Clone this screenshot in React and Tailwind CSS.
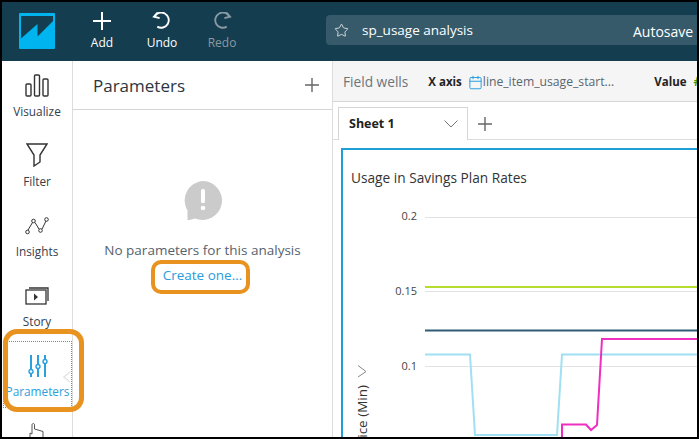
import { Star, Calendar } from "lucide-react";

const font = { fontFamily: '"Open Sans", sans-serif' };

const Logo = () => (
  <svg width="36" height="36" viewBox="0 0 36 36">
    <rect width="36" height="36" rx="1" fill="#00b4f0" />
    <path d="M2 3H34V8L18.500 23.500V11L2 25.500Z" fill="#143d4f" />
  </svg>
);

const PlusIcon = ({ size, color, width }) => (
  <svg width={size} height={size} viewBox="0 0 18 18" fill="none" stroke={color} strokeWidth={width}>
    <path d="M9 0V18M0 9H18" />
  </svg>
);

const UndoIcon = () => (
  <svg width="20" height="17" viewBox="0 0 20 18" fill="none" stroke="currentColor" strokeWidth="2">
    <path d="M2 5A8 8 0 1 1 5 15.500" />
    <path d="M5.500 0.500L1.500 5L7.500 6.500" />
  </svg>
);

const BarsIcon = () => (
  <svg width="24" height="23" viewBox="0 0 24 23" fill="none" stroke="#333" strokeWidth="1.4">
    <rect x="1" y="10" width="5" height="12" rx="1" />
    <rect x="9.500" y="1" width="5" height="21" rx="1" />
    <rect x="18" y="5" width="5" height="17" rx="1" />
  </svg>
);

const FilterIcon = () => (
  <svg width="22" height="24" viewBox="0 0 22 24" fill="none" stroke="#333" strokeWidth="1.4">
    <path d="M1 1H21L14 12V19L8 23V12Z" />
  </svg>
);

const InsightsIcon = () => (
  <svg width="24" height="18" viewBox="0 0 24 18" fill="none" stroke="#333" strokeWidth="1">
    <path d="M3 13L7.500 5.500M10 5.500L14 12M17 12L21 4" />
    <circle cx="2.500" cy="15" r="1.800" />
    <circle cx="8.500" cy="4" r="1.800" />
    <circle cx="15.500" cy="13.500" r="1.800" />
    <circle cx="21.500" cy="2.500" r="1.800" />
  </svg>
);

const StoryIcon = () => (
  <svg width="24" height="18" viewBox="0 0 24 18" fill="none" stroke="#333" strokeWidth="1.300">
    <rect x="1" y="3" width="20" height="14" />
    <path d="M4 1H23V14" />
    <path d="M9 6.500L13 10L9 13.500Z" fill="#333" stroke="none" />
  </svg>
);

const SlidersIcon = () => (
  <svg width="22" height="22" viewBox="0 0 22 22" fill="none" stroke="#2aa0dc" strokeWidth="2">
    <path d="M4 0V14M4 19V22M11 0V9M11 14V22M18 0V4M18 9V22" />
    <circle cx="4" cy="16.500" r="2" strokeWidth="1.400" fill="#fff" />
    <circle cx="11" cy="11.500" r="2" strokeWidth="1.400" fill="#fff" />
    <circle cx="18" cy="6.500" r="2" strokeWidth="1.400" fill="#fff" />
  </svg>
);

const SideItem = ({ icon, label, className }) => (
  <div className={`flex flex-col items-center justify-end ${className}`}>
    {icon}
    <span className="text-[11.8px] leading-4 text-[#33404c]">{label}</span>
  </div>
);

const HeaderBtn = ({ icon, label, muted }) => (
  <div className={`flex flex-col items-center w-[60px] ${muted ? "text-[#8a9aa3]" : "text-white"}`}>
    <div className="h-[17px] flex items-center">{icon}</div>
    <span className="text-[12px] leading-4 mt-[6px] font-medium">{label}</span>
  </div>
);

const Chart = () => (
  <svg width="356" height="290" viewBox="341 148 356 290" className="block">
    <path d="M425 217.500H697M425 291.500H697M425 366.500H697" stroke="#e2e2e2" strokeWidth="1" />
    <g fontSize="11" fill="#444" textAnchor="end" style={font}>
      <text x="417" y="220">0.2</text>
      <text x="417" y="295">0.15</text>
      <text x="417" y="370">0.1</text>
    </g>
    <path d="M425 287H697" stroke="#b5dd30" strokeWidth="2" fill="none" />
    <path d="M425 330.500H697" stroke="#2f5d75" strokeWidth="2" fill="none" />
    <path d="M425 354.500H470L475 435H557L562 354.500H697" stroke="#a0e0f2" strokeWidth="2" fill="none" />
    <path d="M562 438V424.500H586L591 430L597 425L602 339H697" stroke="#ee2fc0" strokeWidth="2" fill="none" />
    <path d="M358 365.500L366 371.500L358 377" stroke="#888" strokeWidth="1" fill="none" />
    <text transform="translate(367 385) rotate(-90)" fontSize="13.5" fill="#333" textAnchor="end" style={font}>ice (Min)</text>
  </svg>
);

export default function App() {
  return (
    <div className="relative w-[699px] h-[439px] border-2 border-black bg-white overflow-hidden flex flex-col" style={font}>
      <header className="h-[59px] shrink-0 bg-[#143d4f] flex items-center">
        <div className="ml-[17px] mr-[17px] mb-[1px]"><Logo /></div>
        <HeaderBtn icon={<PlusIcon size={18} color="#fff" width={2} />} label="Add" />
        <HeaderBtn icon={<UndoIcon />} label="Undo" />
        <HeaderBtn muted icon={<span className="block scale-x-[-1]"><UndoIcon /></span>} label="Redo" />
        <div className="ml-[74px] mb-[3px] flex-1 h-[30px] mr-[-20px] rounded-l-sm bg-[#365a6a] flex items-center text-white">
          <Star size={15} strokeWidth={1.2} className="ml-2" />
          <span className="ml-[13px] text-[13.500px]">sp_usage analysis</span>
          <span className="ml-auto mr-[-1px] mt-[2px] w-[85px] shrink-0 text-[14px] whitespace-nowrap">Autosave</span>
        </div>
      </header>

      <div className="flex-1 flex min-h-0">
        <aside className="w-[71px] shrink-0 border-r border-[#dcdcdc] flex flex-col">
          <SideItem icon={<div className="mb-[6px]"><BarsIcon /></div>} label="Visualize" className="h-[58px]" />
          <SideItem icon={<div className="mb-[6px]"><FilterIcon /></div>} label="Filter" className="h-[70px]" />
          <SideItem icon={<div className="mb-[8px]"><InsightsIcon /></div>} label="Insights" className="h-[70px]" />
          <SideItem icon={<div className="mb-[8px]"><StoryIcon /></div>} label="Story" className="h-[70px]" />
          <div className="relative mt-[12px] ml-[1px] h-[67px] w-[69px] border border-dotted border-[#2aa0dc] flex flex-col items-center pt-[13px]">
            <SlidersIcon />
            <span className="text-[11.800px] leading-4 mt-[6px] text-[#2aa0dc] whitespace-nowrap">Parameters</span>
            <svg className="absolute right-0 top-[29px]" width="8" height="12" viewBox="0 0 8 12" fill="none" stroke="#e5e5e5" strokeWidth="1.500">
              <path d="M7 1L1 6L7 11" />
            </svg>
          </div>
        </aside>

        <section className="w-[260px] shrink-0 border-r border-[#dcdcdc] flex flex-col">
          <div className="h-[49px] border-b border-[#d5d5d5] flex items-center justify-between pl-[20px] pr-[13px]">
            <span className="text-[17px] text-[#2b3640] mt-[1px]">Parameters</span>
            <PlusIcon size={14} color="#666" width={1.800} />
          </div>
          <div className="flex flex-col items-center pt-[70px]">
            <svg width="40" height="40" viewBox="0 0 40 40">
              <path d="M20 1A19.500 19.500 0 1 1 12 38.500L4.500 40.500V30.500A19.500 19.500 0 0 1 20 1Z" fill="#cbcbcb" />
              <rect x="18" y="9" width="4" height="14" rx="1.500" fill="#fff" />
              <circle cx="20" cy="28" r="2.300" fill="#fff" />
            </svg>
            <span className="mt-[20px] text-[13.500px] leading-5 text-[#56626c]">No parameters for this analysis</span>
            <span className="mt-[5px] text-[13.500px] leading-5 text-[#2a9cdc]">Create one...</span>
          </div>
        </section>

        <main className="flex-1 min-w-0 flex flex-col">
          <div className="h-[41px] shrink-0 bg-[#f5f5f5] border-b border-[#d5d5d5] flex items-center pl-[10px] pt-[2px] whitespace-nowrap">
            <span className="text-[13.700px] text-[#6b747c]">Field wells</span>
            <span className="ml-[20px] text-[11.500px] font-bold text-[#222]">X axis</span>
            <Calendar size={15} strokeWidth={1.600} className="ml-[6px] shrink-0 text-[#2aa0dc]" />
            <span className="text-[12.200px] text-[#5a6670]">line_item_usage_start...</span>
            <span className="ml-[40px] text-[11.500px] font-bold text-[#222]">Value</span>
            <span className="ml-[7px] text-[13px] font-bold text-[#3d9a00]">#</span>
          </div>
          <div className="h-[38px] shrink-0 flex items-end pl-[5px] border-b border-[#dcdcdc]">
            <div className="w-[130px] h-[33px] border border-b-0 border-[#d5d5d5] flex items-center justify-between pl-[10px] pr-[9px] mb-[-1px] bg-white">
              <span className="text-[12.500px] font-bold text-[#222]">Sheet 1</span>
              <svg width="14" height="8" viewBox="0 0 14 8" fill="none" stroke="#777" strokeWidth="1">
                <path d="M0.500 0.500L7 7L13.500 0.500" />
              </svg>
            </div>
            <div className="ml-[10px] mb-[8px]"><PlusIcon size={14} color="#666" width={1.800} /></div>
          </div>
          <div className="flex-1 mt-[8px] ml-[8px] border-2 border-r-0 border-b-0 border-[#1f9fd8] relative min-h-0">
            <div className="pl-[8px] pt-[18px] text-[13.700px] leading-5 text-[#333]">Usage in Savings Plan Rates</div>
            <div className="absolute left-[-2px] top-[-2px]"><Chart /></div>
          </div>
        </main>
      </div>

      <div className="absolute left-[1px] top-[327px] w-[81px] h-[83px] rounded-[14px] border-[5px] border-[#e8921f]" />
      <div className="absolute left-[149px] top-[258px] w-[99px] h-[34px] rounded-[10px] border-[4px] border-[#e8921f]" />
      <svg className="absolute left-[26px] top-[421px]" width="18" height="16" viewBox="0 0 18 16" fill="#fff" stroke="#555" strokeWidth="1">
        <path d="M2 16V10L4 11V2C4 0 6.500 0 6.500 2V6L15 8.500V16" />
      </svg>
    </div>
  );
}
